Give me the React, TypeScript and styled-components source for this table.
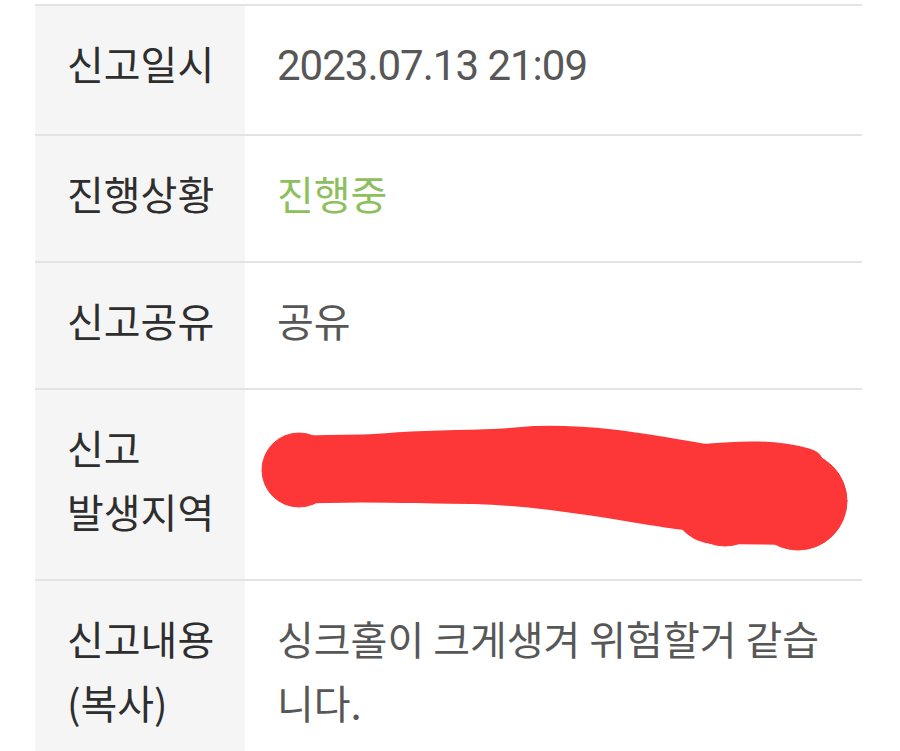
import React from 'react';
import styled, { createGlobalStyle } from 'styled-components';

const GlobalStyle = createGlobalStyle`
  body {
    margin: 0;
    background: #ffffff;
    font-family: "Noto Sans CJK KR", "Noto Sans", sans-serif;
  }
`;

const Table = styled.div`
  margin: 4px 0 0 35px;
  width: 827px;
`;

const Row = styled.div`
  display: grid;
  grid-template-columns: 210px 1fr;
  border-top: 2px solid #e3e3e3;
`;

const Label = styled.div`
  background: #f5f5f5;
  padding: 25px 0 36px 32px;
  font-size: 40px;
  line-height: 64px;
  color: #2e2e2e;
`;

const Value = styled.div<{ status?: boolean }>`
  position: relative;
  padding: 25px 30px 36px 32px;
  font-size: 40px;
  line-height: 64px;
  color: ${(p) => (p.status ? '#8dbf5e' : '#575757')};
`;

const DateText = styled.span`
  font-family: Roboto, "Noto Sans CJK KR", sans-serif;
  font-size: 42px;
  letter-spacing: -1px;
`;

const Scribble = styled.svg`
  position: absolute;
  left: 0;
  top: 0;
  width: 100%;
  height: 100%;
  pointer-events: none;
`;

export default function App() {
  return (
    <>
      <GlobalStyle />
      <Table>
        <Row>
          <Label>신고일시</Label>
          <Value>
            <DateText>2023.07.13 21:09</DateText>
          </Value>
        </Row>
        <Row>
          <Label>진행상황</Label>
          <Value status>진행중</Value>
        </Row>
        <Row>
          <Label>신고공유</Label>
          <Value>공유</Value>
        </Row>
        <Row>
          <Label>
            신고
            <br />
            발생지역
          </Label>
          <Value>
            {/* cell origin ~ (245, 389) in page coords */}
            <Scribble viewBox="0 0 617 189">
              <g fill="#fd3737" stroke="#fd3737" strokeLinecap="round" strokeLinejoin="round">
                <path
                  d="M52 80 C120 76 170 80 230 80 C300 82 360 94 440 106 C480 112 520 116 560 114"
                  fill="none"
                  strokeWidth="68"
                />
                <path
                  d="M110 66 C180 58 230 62 290 56 C350 54 400 64 460 74 C500 70 530 70 560 78"
                  fill="none"
                  strokeWidth="40"
                />
                <circle cx="54" cy="80" r="37" />
                <circle cx="553" cy="111" r="49" />
                <circle cx="480" cy="112" r="44" />
                <path d="M470 110 L553 111" fill="none" strokeWidth="88" />
              </g>
            </Scribble>
          </Value>
        </Row>
        <Row>
          <Label>
            신고내용
            <br />
            (복사)
          </Label>
          <Value>싱크홀이 크게생겨 위험할거 같습니다.</Value>
        </Row>
      </Table>
    </>
  );
}
